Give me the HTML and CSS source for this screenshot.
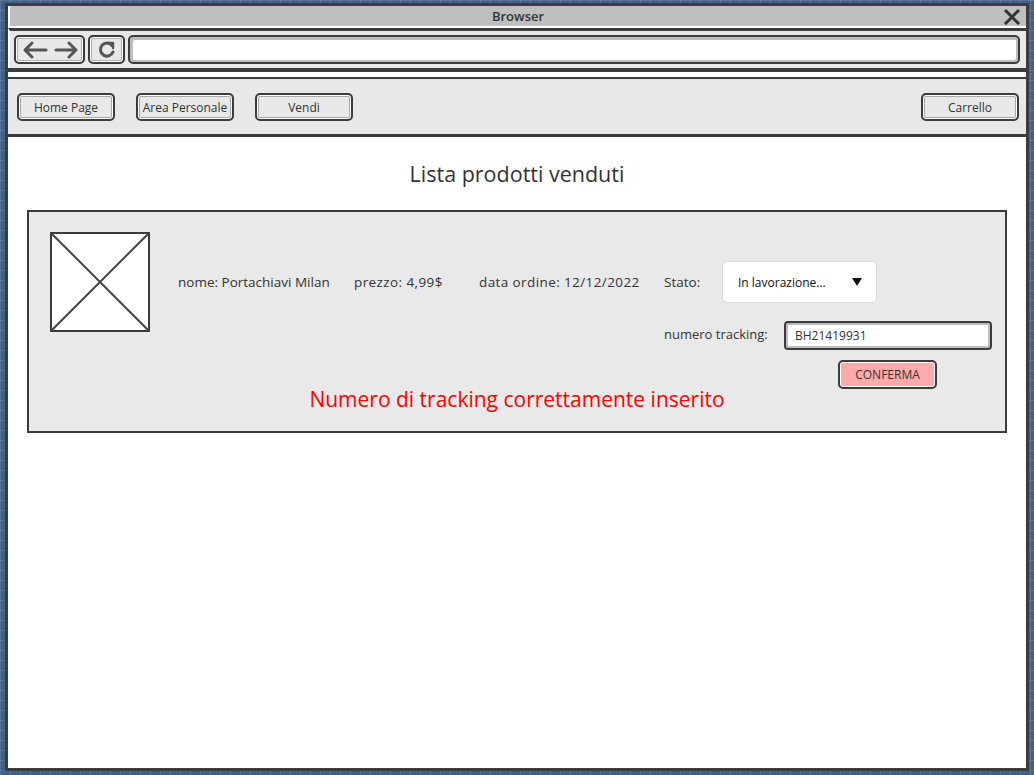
FILE: index.html
```html
<!DOCTYPE html>
<html>
<head>
<meta charset="utf-8">
<link rel="stylesheet" href="styles.css">
</head>
<body>
<div class="window">
  <div class="titlebar">
    <span class="title">Browser</span>
    <svg class="close" width="18" height="16" viewBox="0 0 18 16"><path d="M2 1 L16 15 M16 1 L2 15" stroke="#333" stroke-width="3" fill="none"/></svg>
  </div>
  <div class="toolbar">
    <div class="tbtn nav-arrows">
      <svg width="56" height="20" viewBox="0 0 56 20"><path d="M3 10 H24 M3 10 L10 3 M3 10 L10 17" stroke="#555" stroke-width="3" fill="none" stroke-linecap="round" stroke-linejoin="round"/><path d="M34 10 H54 M54 10 L47 3 M54 10 L47 17" stroke="#555" stroke-width="3" fill="none" stroke-linecap="round" stroke-linejoin="round"/></svg>
    </div>
    <div class="tbtn reload">
      <svg width="20" height="20" viewBox="0 0 20 20"><path d="M15 5.5 A6.5 6.5 0 1 0 16 12" stroke="#555" stroke-width="3" fill="none" stroke-linecap="round"/><path d="M11 3 L16 3 L16 8" stroke="#555" stroke-width="2.5" fill="none" stroke-linecap="round" stroke-linejoin="round"/></svg>
    </div>
    <div class="url"></div>
  </div>
  <div class="sep"></div>
  <div class="navbar">
    <div class="btn">Home Page</div>
    <div class="btn">Area Personale</div>
    <div class="btn">Vendi</div>
    <div class="spacer"></div>
    <div class="btn">Carrello</div>
  </div>
  <div class="content">
    <h1 class="heading">Lista prodotti venduti</h1>
    <div class="panel">
      <div class="item">
        <svg class="thumb" width="100" height="100" viewBox="0 0 100 100"><rect x="1" y="1" width="98" height="98" fill="#fff" stroke="#3c3c3c" stroke-width="2"/><path d="M2 2 L98 98 M98 2 L2 98" stroke="#444" stroke-width="2"/></svg>
        <div class="info">
          <span class="f-nome">nome: Portachiavi Milan</span>
          <span class="f-prezzo">prezzo: 4,99$</span>
          <span class="f-data">data ordine: 12/12/2022</span>
        </div>
        <div class="state">
          <div class="state-row">
            <span class="lbl-stato">Stato:</span>
            <div class="select"><span>In lavorazione...</span><svg width="10" height="8" viewBox="0 0 10 8"><path d="M0 0 H10 L5 8 Z" fill="#111"/></svg></div>
          </div>
          <div class="track-row">
            <span class="lbl-track">numero tracking:</span>
            <div class="input">BH21419931</div>
          </div>
          <div class="confirm">CONFERMA</div>
        </div>
      </div>
      <p class="message">Numero di tracking correttamente inserito</p>
    </div>
  </div>
</div>
</body>
</html>
```
FILE: styles.css
```css
* { box-sizing: border-box; }
html, body { margin: 0; padding: 0; }
body {
  width: 1034px;
  height: 775px;
  overflow: hidden;
  background-color: #3e6089;
  background-image:
    linear-gradient(rgba(255,255,255,0.12) 1px, transparent 1px),
    linear-gradient(90deg, rgba(255,255,255,0.12) 1px, transparent 1px);
  background-size: 10px 10px;
  font-family: "Open Sans", "DejaVu Sans", sans-serif;
  color: #333;
}
.window {
  margin: 3px 0 0 5px;
  width: 1024px;
  height: 768px;
  border: 3px solid #3c3c3c;
  background: #fff;
  display: flex;
  flex-direction: column;
}
.titlebar {
  height: 22px;
  background: #bfbfbf;
  border-left: 2px solid #fff;
  border-bottom: 2px solid #fff;
  display: flex;
  align-items: center;
  justify-content: center;
  position: relative;
}
.title { font-size: 13px; font-weight: 600; color: #333; line-height: 20px; }
.close { position: absolute; right: 5px; top: 3px; }
.toolbar {
  height: 40px;
  border-top: 3px solid #3c3c3c;
  border-left: 2px solid #fff;
  background: #e8e8e8;
  display: flex;
  align-items: center;
  gap: 3px;
  padding: 0 6px 0 4px;
}
.tbtn {
  height: 29px;
  border: 2px solid #3c3c3c;
  border-radius: 5px;
  box-shadow: inset 0 0 0 1px #fff, inset 0 0 0 2px #b0b0b0;
  background: #e8e8e8;
  display: flex;
  align-items: center;
  justify-content: center;
}
.nav-arrows { width: 71px; }
.reload { width: 37px; }
.url {
  flex: 1;
  height: 29px;
  border: 2px solid #3c3c3c;
  border-radius: 5px;
  box-shadow: inset 2px 2px 0 1px #bdbdbd, inset -1px -1px 0 1px #bdbdbd;
  background: #fff;
}
.sep {
  height: 11px;
  background: #fff;
  border-top: 4px solid #3c3c3c;
  border-bottom: 2px solid #3c3c3c;
}
.navbar {
  height: 58px;
  background: #e8e8e8;
  border-bottom: 3px solid #3c3c3c;
  display: flex;
  align-items: flex-start;
  padding: 14px 7px 0 9px;
  gap: 21px;
}
.spacer { flex: 1; }
.btn {
  width: 98px;
  height: 28px;
  border: 2px solid #3c3c3c;
  border-radius: 5px;
  box-shadow: inset 0 0 0 1px #fff, inset 0 0 0 2px #a8a8a8;
  font-size: 12px;
  display: flex;
  align-items: center;
  justify-content: center;
  color: #333;
  white-space: nowrap;
}
.content {
  flex: 1;
  padding: 25px 19px 0 19px;
}
.heading {
  margin: 0;
  font-weight: normal;
  font-size: 21.5px;
  line-height: 24px;
  text-align: center;
  color: #333;
}
.panel {
  margin-top: 24px;
  height: 223px;
  border: 2px solid #3c3c3c;
  background: #e9e9e9;
  padding: 20px 0 0 21px;
}
.item {
  display: flex;
  align-items: flex-start;
}
.thumb { flex: none; }
.info {
  display: flex;
  margin-left: 28px;
  margin-top: 40px;
  font-size: 13.5px;
  line-height: 20px;
  white-space: nowrap;
}
.f-nome { width: 176px; }
.f-prezzo { width: 125px; letter-spacing: 0.4px; }
.f-data { width: 185px; letter-spacing: 0.4px; }
.state {
  margin-top: 29px;
  display: flex;
  flex-direction: column;
}
.state-row { display: flex; align-items: center; font-size: 13.5px; }
.lbl-stato { width: 58px; }
.select {
  width: 155px;
  height: 42px;
  background: #fff;
  border: 1px solid #dadada;
  border-radius: 5px;
  display: flex;
  align-items: center;
  justify-content: space-between;
  padding: 0 14px 0 15px;
  font-size: 12px;
  color: #111;
}
.track-row {
  margin-top: 18px;
  display: flex;
  align-items: center;
  font-size: 13px;
}
.lbl-track { width: 120px; margin-top: -4px; }
.input {
  width: 208px;
  height: 29px;
  border: 2px solid #3c3c3c;
  border-radius: 4px;
  box-shadow: inset 0 0 0 2px #bdbdbd;
  background: #fff;
  font-size: 12px;
  padding-left: 9px;
  display: flex;
  align-items: center;
}
.confirm {
  margin: 10px 0 0 174px;
  width: 99px;
  height: 29px;
  border: 2px solid #3c3c3c;
  border-radius: 5px;
  box-shadow: inset 0 0 0 1px #fff;
  background: #ffaaaa;
  font-size: 12px;
  display: flex;
  align-items: center;
  justify-content: center;
  color: #333;
}
.message {
  margin: -2px 0 0 -21px;
  text-align: center;
  font-size: 21px;
  line-height: 24px;
  color: #ff0000;
}
```
